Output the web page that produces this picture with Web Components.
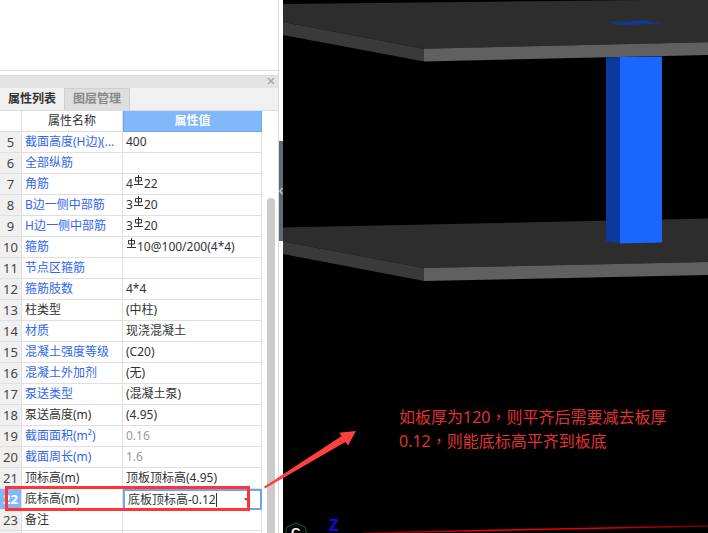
<!DOCTYPE html>
<html lang="zh-CN">
<head>
<meta charset="utf-8">
<title>属性列表</title>
<style>
  html, body { margin: 0; height: 100%; overflow: hidden; background: #000; }
  body { font-family: "Noto Sans", "Noto Sans CJK SC", sans-serif; font-size: 12px; color: #333; }
  /* centred full-width comma, as the reference font draws it */
  .cm { font-family: "Noto Sans CJK TC", sans-serif; }
</style>
</head>
<body>
<app-shell>
  <prop-panel slot="panel">
    <prop-row num="5" link>截面高度(H边)(...<span slot="value">400</span></prop-row>
    <prop-row num="6" link>全部纵筋</prop-row>
    <prop-row num="7" link>角筋<span slot="value">4<rebar-mark></rebar-mark>22</span></prop-row>
    <prop-row num="8" link>B边一侧中部筋<span slot="value">3<rebar-mark></rebar-mark>20</span></prop-row>
    <prop-row num="9" link>H边一侧中部筋<span slot="value">3<rebar-mark></rebar-mark>20</span></prop-row>
    <prop-row num="10" link>箍筋<span slot="value"><rebar-mark></rebar-mark>10@100/200(4*4)</span></prop-row>
    <prop-row num="11" link>节点区箍筋</prop-row>
    <prop-row num="12" link>箍筋肢数<span slot="value">4*4</span></prop-row>
    <prop-row num="13">柱类型<span slot="value">(中柱)</span></prop-row>
    <prop-row num="14" link>材质<span slot="value">现浇混凝土</span></prop-row>
    <prop-row num="15" link>混凝土强度等级<span slot="value">(C20)</span></prop-row>
    <prop-row num="16" link>混凝土外加剂<span slot="value">(无)</span></prop-row>
    <prop-row num="17" link>泵送类型<span slot="value">(混凝土泵)</span></prop-row>
    <prop-row num="18">泵送高度(m)<span slot="value">(4.95)</span></prop-row>
    <prop-row num="19" link muted>截面面积(m²)<span slot="value">0.16</span></prop-row>
    <prop-row num="20" link muted>截面周长(m)<span slot="value">1.6</span></prop-row>
    <prop-row num="21">顶标高(m)<span slot="value">顶板顶标高(4.95)</span></prop-row>
    <prop-row num="22" editing>底标高(m)<span slot="value">底板顶标高-0.12</span></prop-row>
    <prop-row num="23">备注</prop-row>
    <prop-row num=""></prop-row>
  </prop-panel>
  <model-view slot="view"></model-view>
  <note-overlay slot="overlay">
    如板厚为120<span class="cm" lang="zh-TW">，</span>则平齐后需要减去板厚<br>0.12<span class="cm" lang="zh-TW">，</span>则能底标高平齐到板底
  </note-overlay>
</app-shell>

<script>
class AppShell extends HTMLElement {
  constructor() {
    super();
    this.attachShadow({ mode: 'open' }).innerHTML = `
      <style>
        :host { display: flex; position: relative; width: 708px; height: 533px; overflow: hidden; }
        ::slotted([slot=panel]) { flex: 0 0 283px; }
        ::slotted([slot=view]) { flex: 1; }
      </style>
      <slot name="panel"></slot>
      <slot name="view"></slot>
      <slot name="overlay"></slot>
    `;
  }
}

class PropPanel extends HTMLElement {
  constructor() {
    super();
    this.attachShadow({ mode: 'open' }).innerHTML = `
      <style>
        :host { display: flex; background: #fff; height: 533px; position: relative; }
        .main { width: 278px; display: flex; flex-direction: column; }
        .edge { width: 1px; background: #dcdcdc; }
        .grip { width: 4px; padding-top: 141px; }
        .grip div { height: 100px; background: #5f6b78; position: relative; }
        .grip svg { position: absolute; left: 0; top: 46px; }
        .blank { height: 70px; border-bottom: 1px solid #dcdcdc; }
        .title { margin-top: 4px; height: 12px; background: #e4e4e4; border-top: 1px solid #dcdcdc; position: relative; }
        .title svg { position: absolute; left: 267px; top: 1px; }
        .tabs { height: 22px; background: #f0f0f0; display: flex; border-bottom: 1px solid #dcdcdc; font-size: 12px; line-height: 21px; }
        .tab { padding: 0 8px; font-weight: 700; color: #333; }
        .tab.off { width: 48px; box-sizing: content-box; padding: 0 8px; margin-left: 0; background: #dedede; color: #888; border: 1px solid #cfcfcf; border-bottom: 0; font-weight: 700; line-height: 20px; }
        .body { flex: 1; display: flex; overflow: hidden; }
        .table { width: 262px; }
        .head { display: grid; grid-template-columns: 22px 101px 139px; height: 21px; line-height: 20px; text-align: center; background: #fff; }
        .head div { box-sizing: border-box; border-right: 1px solid #e0e0e0; border-bottom: 1px solid #dcdcdc; }
        .head .val { background: #80b8f9; color: #fff; font-weight: 700; border: 1px solid #6fa9ec; border-top: 0; }
        .track { flex: 1; padding: 87px 3px 0 5px; }
        .thumb { height: 400px; background: #cbcbcb; border-radius: 4px 4px 0 0; }
      </style>
      <div class="main">
        <div class="blank"></div>
        <div class="title">
          <svg width="8" height="8" viewBox="0 0 8 8"><path d="M1 1l6 6M7 1L1 7" stroke="#a8a8a8" stroke-width="1.4" fill="none"/></svg>
        </div>
        <div class="tabs"><div class="tab">属性列表</div><div class="tab off">图层管理</div></div>
        <div class="body">
          <div class="table">
            <div class="head"><div></div><div>属性名称</div><div class="val">属性值</div></div>
            <slot></slot>
          </div>
          <div class="track"><div class="thumb"></div></div>
        </div>
      </div>
      <div class="edge"></div>
      <div class="grip"><div><svg width="4" height="8" viewBox="0 0 4 8"><path d="M3.5 1L.8 4l2.7 3" stroke="#c8ccd0" stroke-width="1.2" fill="none"/></svg></div></div>
    `;
  }
}

class PropRow extends HTMLElement {
  constructor() {
    super();
    const editing = this.hasAttribute('editing');
    const shadow = this.attachShadow({ mode: 'open' });
    shadow.innerHTML = `
      <style>
        :host { display: grid; grid-template-columns: 22px 101px 139px; height: 21px; line-height: 20px; color: #333; }
        div { box-sizing: border-box; border-right: 1px solid #e0e0e0; border-bottom: 1px solid #e0e0e0; white-space: nowrap; overflow: hidden; }
        .num { background: #f0f0f0; text-align: center; font-size: 13px; color: #444; }
        .name { padding-left: 3px; }
        :host([link]) .name { color: #3366ee; }
        .value { padding-left: 3px; position: relative; }
        :host([muted]) .value { color: #999; }
        :host([editing]) .num { background: #80b8f9; color: #fff; font-weight: 700; }
        :host([editing]) .value { border: 2px solid #6aa8e8; padding-left: 3px; line-height: 17px; overflow: visible; }
        .caret { display: inline-block; width: 1px; height: 14px; background: #333; vertical-align: -3px; }
        .drop { position: absolute; right: 12px; top: 7px; width: 0; height: 0; border: 2.5px solid transparent; border-top: 3px solid #666; border-bottom: 0; }
      </style>
      <div class="num">${this.getAttribute('num') || ''}</div>
      <div class="name"><slot></slot></div>
      <div class="value"><slot name="value"></slot>${editing ? '<span class="caret"></span><span class="drop"></span>' : ''}</div>
    `;
  }
}

// HRB400 bar symbol, the CAD font glyph is not installed so it is drawn
class RebarMark extends HTMLElement {
  constructor() {
    super();
    this.attachShadow({ mode: 'open' }).innerHTML = `
      <style>
        :host { display: inline-block; width: 11px; height: 11px; vertical-align: 2px; }
        svg { display: block; }
      </style>
      <svg width="11" height="11" viewBox="0 0 11 11" fill="none" stroke="#333" stroke-width="1">
        <path d="M5.5 0v9M2.5 2.5h6v3.5h-6zM1 9.5h9"/>
      </svg>
    `;
  }
}

class ModelView extends HTMLElement {
  constructor() {
    super();
    this.attachShadow({ mode: 'open' }).innerHTML = `
      <style>
        :host { display: block; background: #000; height: 533px; position: relative; }
        svg { display: block; }
        .z { position: absolute; left: 46px; top: 517px; color: #0a0aff; font: 700 16px "Liberation Sans", sans-serif; line-height: 18px; }
        .c { position: absolute; left: 8px; top: 525px; color: #fff; font: 700 13px "Liberation Sans", sans-serif; line-height: 15px; }
      </style>
      <svg width="425" height="533" viewBox="283 0 425 533">
        <defs>
          <linearGradient id="axis" x1="0" x2="1" y1="0" y2="0">
            <stop offset="0" stop-color="#5a0000"/>
            <stop offset=".35" stop-color="#ff0000"/>
            <stop offset=".7" stop-color="#e00000"/>
            <stop offset="1" stop-color="#700000"/>
          </linearGradient>
        </defs>
        <!-- upper slab -->
        <polygon points="283,4 643,0 708,0 708,42.3 424,48.7 283,22" fill="#2d2d2d"/>
        <polygon points="283,22 424,48.7 424,61.5 283,35" fill="#3a3a3a"/>
        <polygon points="424,48.7 708,42.3 708,55 424,61.5" fill="#606060"/>
        <polygon points="606,21.3 618,22.3 643,20.5 662,23.5 620,25" fill="#0a3a9e"/>
        <!-- lower slab -->
        <polygon points="283,227.5 708,218.5 708,262 424,268 283,241.5" fill="#2d2d2d"/>
        <polygon points="283,241.5 424,268 424,281 283,254" fill="#3a3a3a"/>
        <polygon points="424,268 708,262 708,275 424,281" fill="#606060"/>
        <!-- column -->
        <polygon points="606,57.5 620,57 620,243.5 606,241" fill="#0a3a9e"/>
        <polygon points="620,57 662,56.5 662,242.5 620,243.5" fill="#1a66ff"/>
        <!-- axes -->
        <polygon points="296,523 305,527 307,535 285,535 287,527" fill="none" stroke="#0b6b1e" stroke-width="1"/>
        <line x1="363" y1="533" x2="708" y2="526" stroke="url(#axis)" stroke-width="1.4"/>
      </svg>
      <span class="c">C</span>
      <span class="z">Z</span>
    `;
  }
}

class NoteOverlay extends HTMLElement {
  constructor() {
    super();
    this.attachShadow({ mode: 'open' }).innerHTML = `
      <style>
        :host { position: absolute; inset: 0; display: block; pointer-events: none; }
        .text { position: absolute; left: 399px; top: 405px; font-size: 16px; line-height: 22.5px; color: #e03232; white-space: nowrap; }
        .box { position: absolute; left: 5px; top: 486px; width: 239px; height: 19px; border: 3px solid #ff3338; }
        svg { position: absolute; left: 0; top: 0; }
      </style>
      <div class="box"></div>
      <svg width="708" height="533">
        <polygon points="264,486.7 341.7,436 339,432.8 356,431 348,445.5 345.3,442 265,488.5" fill="#ff4040"/>
      </svg>
      <div class="text"><slot></slot></div>
    `;
  }
}

customElements.define('app-shell', AppShell);
customElements.define('prop-panel', PropPanel);
customElements.define('prop-row', PropRow);
customElements.define('rebar-mark', RebarMark);
customElements.define('model-view', ModelView);
customElements.define('note-overlay', NoteOverlay);
</script>
</body>
</html>
